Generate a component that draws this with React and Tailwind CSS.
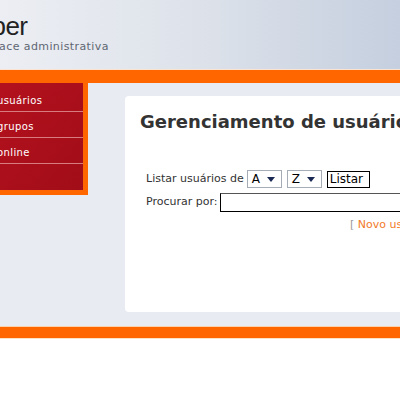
import React from "react";

const menu = ["Usuários", "Grupos", "Online"];

const Select = ({ value }) => (
  <div className="flex items-center justify-between w-[35px] h-[18px] border border-[#a5acb5] bg-white px-[4px] text-[12px] text-black">
    <span>{value}</span>
    <svg width="8" height="5" viewBox="0 0 8 5" className="mr-[2px]">
      <path d="M0 0 L8 0 L4 5 Z" fill="#1b2a55" />
    </svg>
  </div>
);

const App = () => {
  return (
    <div className="w-[400px] h-[400px] overflow-hidden bg-white font-['DejaVu_Sans',sans-serif]">
      {/* header */}
      <div className="h-[69px] bg-gradient-to-r from-[#eceef3] via-[#dde2ea] to-[#c5cfdf] overflow-hidden">
        <div className="ml-[-49px] pt-[12px]">
          <div className="text-[26px] leading-[28px] text-[#222] font-['Liberation_Sans',sans-serif] tracking-[-0.5px]">
            Jabber
          </div>
          <div className="ml-[16px] text-[11px] leading-[14px] tracking-[0.4px] text-[#5f6673]">
            Interface administrativa
          </div>
        </div>
      </div>
      <div className="h-px bg-[#fbe3cf]" />
      <div className="h-[13px] bg-[#ff6600]" />

      {/* body */}
      <div className="flex h-[243px] bg-[#e8ebf2]">
        <div className="w-[88px] h-[112px] bg-[#ff6600] pr-[5px] pb-[5px] shrink-0">
          <div className="h-full bg-gradient-to-br from-[#b3111d] to-[#a10d18] pt-[3px] overflow-hidden">
            {menu.map((m) => (
              <div
                key={m}
                className="h-[26px] flex items-center pt-[4px] border-b border-[#d87c80] text-white text-[10px] tracking-[0.4px] whitespace-nowrap"
              >
                <span className="ml-[-3px]">{m.toLowerCase()}</span>
              </div>
            ))}
          </div>
        </div>
        <div className="ml-[37px] mt-[13px] h-[216px] flex-1 min-w-[300px] bg-white rounded-tl-[4px] rounded-bl-[4px] pl-[15px] pt-[14px]">
          <h1 className="text-[18px] font-bold text-[#333] whitespace-nowrap leading-[24px]">
            Gerenciamento de usuários
          </h1>
          <div className="mt-[36px] pl-[6px] text-[11px] text-[#333]">
            <div className="flex items-center gap-[5px] h-[18px]">
              <span className="mr-[-2px]">Listar usuários de</span>
              <Select value="A" />
              <Select value="Z" />
              <div className="h-[17px] w-[43px] border border-black flex items-center px-[2px] text-[12px] text-black">
                Listar
              </div>
            </div>
            <div className="flex items-center gap-[2px] h-[19px] mt-[5px] whitespace-nowrap">
              <span>Procurar por:</span>
              <div className="h-[19px] w-[300px] border border-black border-t-[#555] bg-white shrink-0" />
            </div>
            <div className="mt-[5px] pl-[204px] whitespace-nowrap text-[11px]">
              <span className="text-[#999]">[</span>{" "}
              <span className="text-[#f27a2a]">Novo usuário</span>
            </div>
          </div>
        </div>
      </div>
      <div className="h-px bg-[#fcd2ad]" />
      <div className="h-[11px] bg-[#ff6600]" />
      <div className="h-px bg-[#fde2c8]" />
    </div>
  );
};

export default App;
